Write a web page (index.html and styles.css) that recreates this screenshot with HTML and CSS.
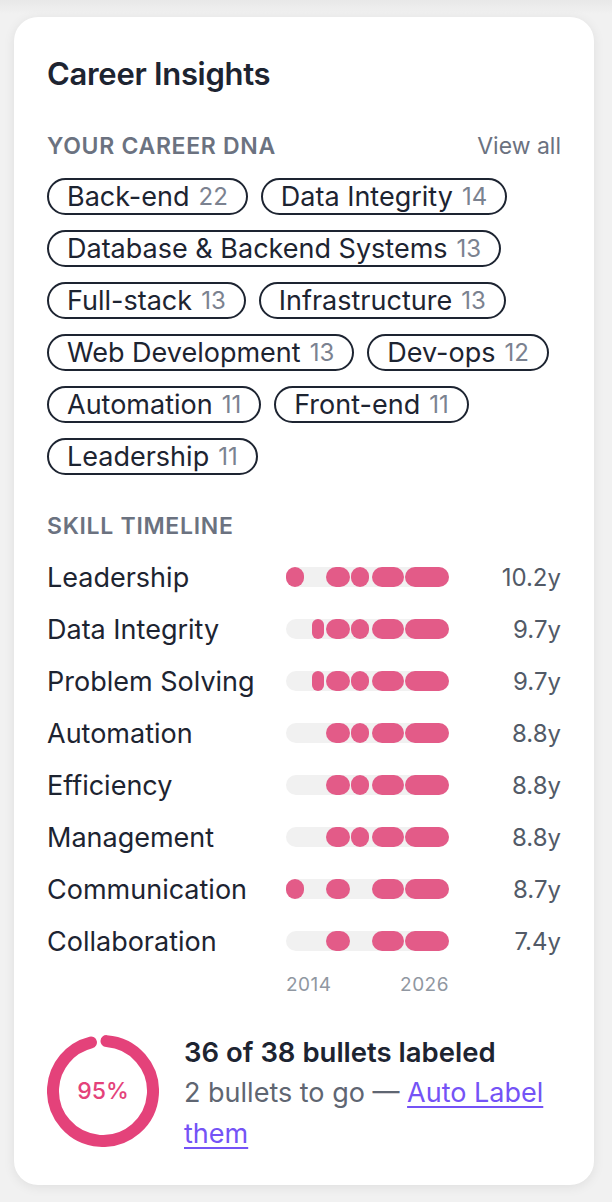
FILE: index.html
```html
<!DOCTYPE html>
<html lang="en">
<head>
<meta charset="utf-8">
<title>Career Insights</title>
<link rel="stylesheet" href="styles.css">
</head>
<body>
<div class="page">
  <section class="card">
    <h2 class="card-title">Career Insights</h2>

    <div class="section-head">
      <span class="section-label">Your Career DNA</span>
      <a class="view-all" href="#">View all</a>
    </div>
    <div class="chips">
      <span class="chip">Back-end <span class="count">22</span></span>
      <span class="chip">Data Integrity <span class="count">14</span></span>
      <span class="chip">Database &amp; Backend Systems <span class="count">13</span></span>
      <span class="chip">Full-stack <span class="count">13</span></span>
      <span class="chip">Infrastructure <span class="count">13</span></span>
      <span class="chip">Web Development <span class="count">13</span></span>
      <span class="chip">Dev-ops <span class="count">12</span></span>
      <span class="chip">Automation <span class="count">11</span></span>
      <span class="chip">Front-end <span class="count">11</span></span>
      <span class="chip">Leadership <span class="count">11</span></span>
    </div>

    <div class="section-head timeline-head">
      <span class="section-label">Skill Timeline</span>
    </div>
    <div class="timeline">
      <div class="tl-row">
        <span class="tl-name">Leadership</span>
        <div class="track">
          <i class="seg" style="left:0%;width:11.04%"></i>
          <i class="seg" style="left:24.54%;width:14.72%"></i>
          <i class="seg" style="left:39.88%;width:11.24%"></i>
          <i class="seg" style="left:52.94%;width:19.45%"></i>
          <i class="seg" style="left:73.19%;width:26.81%"></i>
        </div>
        <span class="tl-years">10.2y</span>
      </div>
      <div class="tl-row">
        <span class="tl-name">Data Integrity</span>
        <div class="track">
          <i class="seg" style="left:15.95%;width:7.36%"></i>
          <i class="seg" style="left:24.54%;width:14.72%"></i>
          <i class="seg" style="left:39.88%;width:11.24%"></i>
          <i class="seg" style="left:52.94%;width:19.45%"></i>
          <i class="seg" style="left:73.19%;width:26.81%"></i>
        </div>
        <span class="tl-years">9.7y</span>
      </div>
      <div class="tl-row">
        <span class="tl-name">Problem Solving</span>
        <div class="track">
          <i class="seg" style="left:15.95%;width:7.36%"></i>
          <i class="seg" style="left:24.54%;width:14.72%"></i>
          <i class="seg" style="left:39.88%;width:11.24%"></i>
          <i class="seg" style="left:52.94%;width:19.45%"></i>
          <i class="seg" style="left:73.19%;width:26.81%"></i>
        </div>
        <span class="tl-years">9.7y</span>
      </div>
      <div class="tl-row">
        <span class="tl-name">Automation</span>
        <div class="track">
          <i class="seg" style="left:24.54%;width:14.72%"></i>
          <i class="seg" style="left:39.88%;width:11.24%"></i>
          <i class="seg" style="left:52.94%;width:19.45%"></i>
          <i class="seg" style="left:73.19%;width:26.81%"></i>
        </div>
        <span class="tl-years">8.8y</span>
      </div>
      <div class="tl-row">
        <span class="tl-name">Efficiency</span>
        <div class="track">
          <i class="seg" style="left:24.54%;width:14.72%"></i>
          <i class="seg" style="left:39.88%;width:11.24%"></i>
          <i class="seg" style="left:52.94%;width:19.45%"></i>
          <i class="seg" style="left:73.19%;width:26.81%"></i>
        </div>
        <span class="tl-years">8.8y</span>
      </div>
      <div class="tl-row">
        <span class="tl-name">Management</span>
        <div class="track">
          <i class="seg" style="left:24.54%;width:14.72%"></i>
          <i class="seg" style="left:39.88%;width:11.24%"></i>
          <i class="seg" style="left:52.94%;width:19.45%"></i>
          <i class="seg" style="left:73.19%;width:26.81%"></i>
        </div>
        <span class="tl-years">8.8y</span>
      </div>
      <div class="tl-row">
        <span class="tl-name">Communication</span>
        <div class="track">
          <i class="seg" style="left:0%;width:11.04%"></i>
          <i class="seg" style="left:24.54%;width:14.72%"></i>
          <i class="seg" style="left:52.94%;width:19.45%"></i>
          <i class="seg" style="left:73.19%;width:26.81%"></i>
        </div>
        <span class="tl-years">8.7y</span>
      </div>
      <div class="tl-row">
        <span class="tl-name">Collaboration</span>
        <div class="track">
          <i class="seg" style="left:24.54%;width:14.72%"></i>
          <i class="seg" style="left:52.94%;width:19.45%"></i>
          <i class="seg" style="left:73.19%;width:26.81%"></i>
        </div>
        <span class="tl-years">7.4y</span>
      </div>
      <div class="tl-axis">
        <span></span>
        <div class="axis-labels"><span>2014</span><span>2026</span></div>
        <span></span>
      </div>
    </div>

    <div class="progress">
      <div class="donut">
        <svg viewBox="0 0 112 112" width="112" height="112" aria-hidden="true">
          <circle class="donut-arc" cx="56" cy="56" r="50" pathLength="100" stroke-dasharray="95 100" transform="rotate(-86 56 56)"/>
        </svg>
        <span class="donut-label">95%</span>
      </div>
      <div class="progress-text">
        <p class="progress-title">36 of 38 bullets labeled</p>
        <p class="progress-sub">2 bullets to go — <a href="#">Auto Label them</a></p>
      </div>
    </div>
  </section>
</div>
</body>
</html>
```

FILE: styles.css
```css
* {
  box-sizing: border-box;
}

html,
body {
  margin: 0;
  padding: 0;
}

body {
  background: linear-gradient(#e8e8e8 0, #f1f1f1 14px) #f1f1f1;
  font-family: Inter, "Noto Sans", "Liberation Sans", sans-serif;
  color: #1d2431;
}

.page {
  padding: 17px 18px 20px 14px;
}

.card {
  background: #ffffff;
  border-radius: 24px;
  box-shadow: 0 2px 12px rgba(0, 0, 0, 0.08);
  padding: 40px 33px 31px;
}

.card-title {
  margin: 0;
  font-size: 31px;
  line-height: 34px;
  font-weight: 600;
  letter-spacing: -0.3px;
}

.section-head {
  display: flex;
  justify-content: space-between;
  align-items: center;
  margin-top: 43px;
  margin-bottom: 20px;
  height: 24px;
}

.section-label {
  font-size: 23px;
  font-weight: 600;
  letter-spacing: 0.7px;
  text-transform: uppercase;
  color: #6b7280;
}

.view-all {
  font-size: 23px;
  color: #6b7280;
  text-decoration: none;
}

.chips {
  display: flex;
  flex-wrap: wrap;
  gap: 15px 13px;
}

.chip {
  display: flex;
  align-items: center;
  gap: 9px;
  height: 37px;
  border: 2px solid #1d2431;
  border-radius: 999px;
  padding: 0 18px;
  font-size: 27px;
  line-height: 30px;
  white-space: nowrap;
}

.count {
  font-size: 24px;
  color: #7b8290;
}

.timeline-head {
  margin-top: 39px;
  margin-bottom: 13px;
}

.tl-row,
.tl-axis {
  display: grid;
  grid-template-columns: 1fr 163px 112px;
  align-items: center;
}

.tl-row {
  height: 52px;
}

.tl-name {
  font-size: 27px;
}

.tl-years {
  text-align: right;
  font-size: 24px;
  color: #525a67;
}

.track {
  position: relative;
  height: 20px;
  border-radius: 10px;
  background: #f1f1f1;
}

.seg {
  position: absolute;
  top: 0;
  bottom: 0;
  border-radius: 10px;
  background: #e35b88;
}

.tl-axis {
  margin-top: 8px;
}

.axis-labels {
  display: flex;
  justify-content: space-between;
  font-size: 19px;
  line-height: 20px;
  color: #9097a1;
  letter-spacing: 0.5px;
}

.progress {
  display: flex;
  align-items: flex-start;
  gap: 25px;
  margin-top: 37px;
}

.donut {
  position: relative;
  flex: none;
  width: 112px;
  height: 112px;
  margin-top: 3px;
}

.donut svg {
  display: block;
}

.donut-arc {
  fill: none;
  stroke: #e4427a;
  stroke-width: 12;
  stroke-linecap: round;
}

.donut-label {
  position: absolute;
  inset: 0;
  display: flex;
  align-items: center;
  justify-content: center;
  font-size: 23px;
  font-weight: 500;
  color: #e4427a;
}

.progress-text p {
  margin: 0;
}

.progress-title {
  font-size: 27.5px;
  line-height: 40px;
  font-weight: 600;
}

.progress-sub {
  font-size: 27px;
  line-height: 41px;
  color: #5f6672;
}

.progress-sub a {
  color: #7453f6;
  text-decoration: underline;
  text-decoration-thickness: 1.5px;
  text-underline-offset: 4px;
}
```
